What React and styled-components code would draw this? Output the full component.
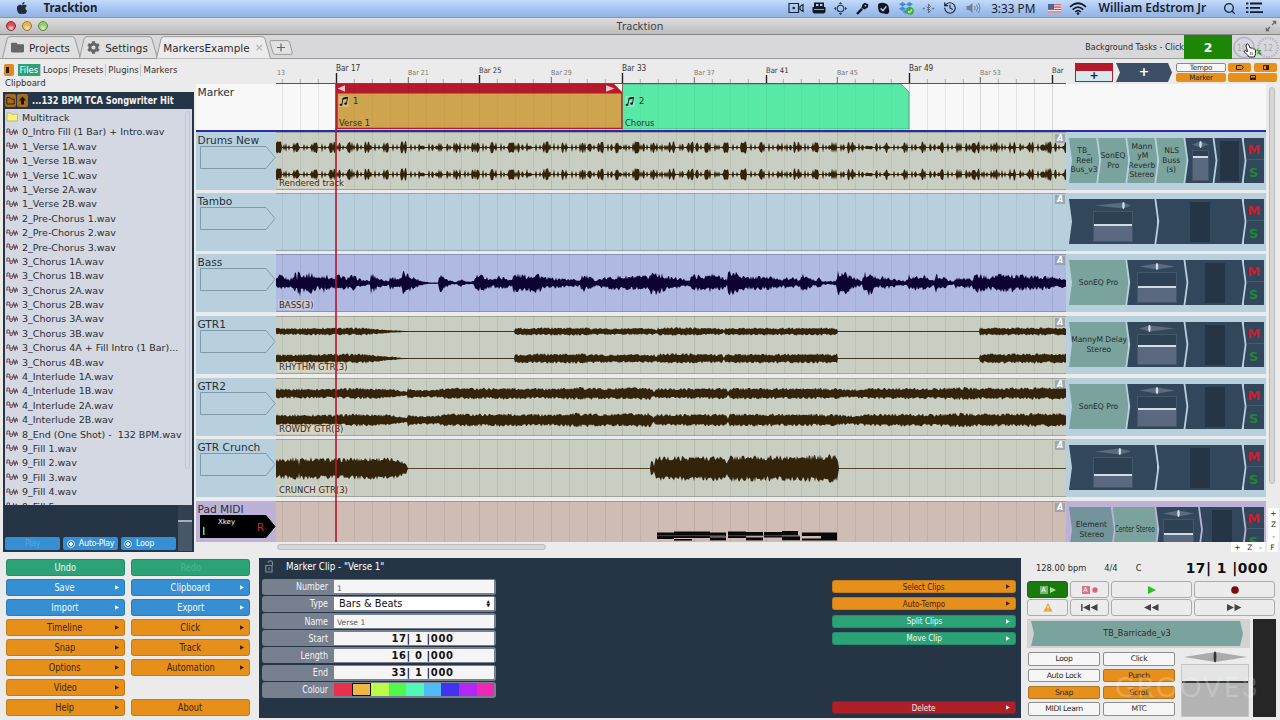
import React from "react";
import styled, { createGlobalStyle } from "styled-components";
import { FaApple, FaDropbox, FaFolder, FaCog } from "react-icons/fa";
import { LuHistory, LuSearch } from "react-icons/lu";

//data
const FILES = [
  "0_Intro Fill (1 Bar) + Intro.wav",
  "1_Verse 1A.wav",
  "1_Verse 1B.wav",
  "1_Verse 1C.wav",
  "1_Verse 2A.wav",
  "1_Verse 2B.wav",
  "2_Pre-Chorus 1.wav",
  "2_Pre-Chorus 2.wav",
  "2_Pre-Chorus 3.wav",
  "3_Chorus 1A.wav",
  "3_Chorus 1B.wav",
  "3_Chorus 2A.wav",
  "3_Chorus 2B.wav",
  "3_Chorus 3A.wav",
  "3_Chorus 3B.wav",
  "3_Chorus 4A + Fill Intro (1 Bar)...",
  "3_Chorus 4B.wav",
  "4_Interlude 1A.wav",
  "4_Interlude 1B.wav",
  "4_Interlude 2A.wav",
  "4_Interlude 2B.wav",
  "8_End (One Shot) -  132 BPM.wav",
  "9_Fill 1.wav",
  "9_Fill 2.wav",
  "9_Fill 3.wav",
  "9_Fill 4.wav",
  "9_Fill 5.wav",
];

const SWATCHES = [
  "#e8304a",
  "#efb545",
  "#bdfb4b",
  "#50fa4a",
  "#50fab6",
  "#4fbcf7",
  "#4233f0",
  "#b227f3",
  "#ee27b4",
];

const BAR = 17.9;
const FIRST = 6.4; // bar line left of the lane's first beat
const LANE = 790;

// loudness keyframes, [x, height]
const BASS = [
  [0, 4], [4, 7], [12, 4], [17, 5], [19, 13], [21, 4], [22, 12], [28, 8], [35, 9], [42, 5], [48, 8],
  [58, 4], [61, 8], [70, 5], [76, 7], [86, 3], [94, 2], [95, 9], [104, 4], [113, 2], [114, 6], [125, 4],
  [127, 10], [136, 6], [146, 2], [154, 0.6], [162, 0.6], [163, 9], [172, 3], [180, 1], [185, 3.5], [191, 1],
  [198, 2], [200, 7], [206, 7], [218, 3], [221, 7], [236, 3], [238, 8], [252, 7], [262, 9], [268, 5], [290, 4],
  [304, 3], [306, 8], [320, 3], [330, 5], [342, 6], [356, 6], [372, 6], [376, 10], [381, 10], [390, 6],
  [414, 3], [416, 8], [426, 6], [436, 8], [450, 5], [451, 2], [452, 10], [460, 10], [470, 5], [476, 6],
  [490, 6], [506, 4], [516, 5], [524, 3], [526, 8], [540, 2], [543, 6], [546, 1.5], [560, 2], [562, 12],
  [574, 7], [586, 2], [588, 9], [594, 11], [604, 3], [606, 6], [630, 2], [633, 7], [644, 5], [650, 7],
  [658, 2], [660, 8], [670, 4], [678, 1.5], [680, 5], [696, 4], [701, 8], [712, 6], [726, 8], [744, 7],
  [764, 6], [790, 4],
];
const RHYTHM = [
  [0, 3], [50, 3.3], [90, 3.3], [105, 2], [132, 0.3], [238, 0.3], [239, 3.2], [300, 3.6], [330, 2.8],
  [378, 3], [380, 1.4], [382, 3.2], [400, 3.8], [446, 3], [448, 1], [450, 3.2], [561, 3.3], [562, 0.3],
  [703, 0.3], [704, 3.4], [790, 3.4],
];
const ROWDY = [
  [0, 4.5], [60, 4.2], [80, 5], [110, 4.5], [131, 2], [132, 5], [140, 3.6], [160, 3.6], [168, 5], [240, 5], [270, 4.5],
  [300, 5.6], [330, 4.8], [374, 5.6], [378, 2], [380, 4.5], [450, 5], [452, 1.6], [454, 5], [562, 4.6],
  [572, 3.6], [600, 5.2], [660, 4.6], [676, 5.6], [720, 5], [790, 5.5],
];
const CRUNCH = [
  [0, 9], [22, 10], [23, 4], [24, 10], [60, 9], [100, 10], [120, 9], [130, 5], [132, 0.3], [374, 0.3],
  [375, 9], [378, 3], [380, 10.5], [420, 11], [449, 11], [451, 5], [454, 11.5], [520, 11], [561, 12.5], [563, 0.3],
];

const rand = (n) => {
  const v = Math.sin(n * 127.1 + 311.7) * 43758.5453;
  return v - Math.floor(v);
};

const level = (keys, x) => {
  const i = keys.findIndex((k) => k[0] > x);
  if (i < 0) return keys[keys.length - 1][1];
  if (i === 0) return keys[0][1];
  const [x0, a] = keys[i - 1];
  const [x1, b] = keys[i];
  return a + ((b - a) * (x - x0)) / (x1 - x0);
};

// a burst late in every bar, single hits between them
const drumLevel = (x) => {
  const p = (x - 60 + BAR * 10) % BAR;
  const r = rand(Math.floor(x) + 5);
  if (p > 10.5 && p < 17) return r > 0.45 ? 3.6 + r * 2.4 : 1.8;
  if (p > 3 && p < 4.1) return 4.6;
  if (p > 6.5 && p < 7.6) return 3;
  return r > 0.9 ? 3.2 : 0.6;
};

const wave = (levelAt, mid, rough, seed) => {
  const top = [];
  const bottom = [];
  for (let x = 0; x <= LANE; x += 1) {
    const a = levelAt(x);
    const up = a < 0.5 ? a : a * (1 - rough + rand(x + seed) * rough * 1.6);
    const down = a < 0.5 ? a : a * (1 - rough + rand(x + seed + 900) * rough * 1.6);
    top.push(`${x},${(mid - up).toFixed(1)}`);
    bottom.unshift(`${x},${(mid + down).toFixed(1)}`);
  }
  return top.concat(bottom).join(" ");
};

const TRACKS = [
  {
    name: "Drums New", clip: "Rendered track", bg: "#c8cec1", ink: "#33230a", gap: 3, fader: 17, meter: 19, pan: 50, vol: 20,
    plugins: [["TB_", "Reel", "Bus_v3"], ["SonEQ", "Pro"], ["Mann", "yM", "Reverb", "Stereo"], ["NLS", "Buss", "(s)"]],
    waves: [wave(drumLevel, 15.5, 0.2, 1), wave(drumLevel, 42.5, 0.2, 1)],
  },
  { name: "Tambo", bg: "#b8d0de", gap: 3, fader: 40, meter: 20, pan: 79, vol: 42, plugins: [], waves: [] },
  {
    name: "Bass", clip: "BASS(3)", bg: "#afb9e1", ink: "#0c0332", gap: 4, fader: 40, meter: 20, pan: 50, vol: 47,
    plugins: [["SonEQ Pro"]],
    waves: [wave((x) => level(BASS, x), 29, 0.45, 3)],
  },
  {
    name: "GTR1", clip: "RHYTHM GTR(3)", bg: "#c8cec1", ink: "#33230a", gap: 4, fader: 40, meter: 20, pan: 29, vol: 36,
    plugins: [["MannyM Delay", "Stereo"]],
    waves: [
      wave((x) => level(RHYTHM, x), 15.5, 0.35, 7),
      wave((x) => level(RHYTHM, x) * (level(RHYTHM, x) > 1 ? 1.25 : 1), 42.5, 0.35, 11),
    ],
  },
  {
    name: "GTR2", clip: "ROWDY GTR(3)", bg: "#c8cec1", ink: "#33230a", gap: 3, fader: 40, meter: 20, pan: 50, vol: 39,
    plugins: [["SonEQ Pro"]],
    waves: [wave((x) => level(ROWDY, x), 15.5, 0.32, 13), wave((x) => level(ROWDY, x) * 1.12, 42, 0.32, 17)],
  },
  {
    name: "GTR Crunch", clip: "CRUNCH GTR(3)", bg: "#c8cec1", ink: "#33230a", gap: 4, fader: 40, meter: 20, pan: 69, vol: 56,
    plugins: [],
    waves: [wave((x) => level(CRUNCH, x), 29.5, 0.3, 19)],
  },
  {
    name: "Pad MIDI", bg: "#cfbdb5", head: "#beb1d8", gap: 0, fader: 31, meter: 20, pan: 50, vol: 45, midi: true,
    plugins: [["Element", "Stereo"], ["Center Stereo"]], waves: [],
  },
];

// [x, y, width, height]
const NOTES = [
  [381, 31.5, 17, 6.5], [398, 30.5, 36, 6.5], [398, 38, 18, 1.6], [434, 31.5, 16, 4], [434, 36.4, 16, 3],
  [452, 30.5, 18, 6.5], [469, 31, 18, 4], [470, 36.4, 17, 3], [488, 31, 18, 5.5],
  [506, 30, 16, 4.5], [506, 35.3, 18, 4], [526, 31.5, 35, 3.5], [526, 37.5, 35, 2], [545, 35, 16, 3],
];

const MENU = [
  ["Undo", "green", "Redo", "greenOff"],
  ["Save", "blue", "Clipboard", "blue"],
  ["Import", "blue", "Export", "blue"],
  ["Timeline", "orange", "Click", "orange"],
  ["Snap", "orange", "Track", "orange"],
  ["Options", "orange", "Automation", "orange"],
  ["Video", "orange", null, null],
  ["Help", "orange", "About", "orange"],
];

const TONES = {
  green: { bg: "#2ba377", fg: "#f2fbf7" },
  greenOff: { bg: "#2ba377", fg: "#4fb590" },
  blue: { bg: "#368fd3", fg: "#f2f8fd" },
  orange: { bg: "#e68f1a", fg: "#3c2608" },
  red: { bg: "#ad2028", fg: "#fbeaea" },
};

//components
const GridLines = ({ height }) => (
  <g>
    {Array.from({ length: 45 }, (_, i) => (
      <rect key={i} x={Math.round(FIRST + i * BAR)} y="0" width="1" height={height} fill="#000" opacity={(i + 1) % 4 === 0 ? 0.09 : 0.055} />
    ))}
  </g>
);

const Ruler = () => (
  <svg width={LANE} height="25">
    {Array.from({ length: 44 }, (_, i) => {
      const bar = 14 + i;
      const x = Math.round(60 + (bar - 17) * BAR);
      const rank = (bar - 1) % 16 === 0 ? 11 : (bar - 1) % 8 === 0 ? 9 : (bar - 1) % 4 === 0 ? 7 : 5;
      const dark = rank === 5 ? "#aaa" : rank === 7 ? "#666" : "#222";
      return (
        <g key={bar}>
          <rect x={x - 0.2} y={25 - rank} width={rank > 7 ? 1.4 : 1} height={rank} fill={dark} />
          {rank > 5 && (
            <RulerText x={x} y={rank === 11 ? 12.3 : rank === 9 ? 14 : 15.5} $rank={rank}>
              {bar === 57 ? "Bar" : `Bar ${bar}`}
            </RulerText>
          )}
        </g>
      );
    })}
    <RulerText x="1" y="15.5" $rank={7}>13</RulerText>
    <rect x="0" y="24" width={LANE} height="1" fill="#555" />
  </svg>
);

const MusicNote = () => (
  <svg width="10" height="11" viewBox="0 0 10 11">
    <rect width="10" height="11" fill="#fff" opacity=".22" />
    <path d="M2.9 8.5 L4 2.2 L8.6 1.2 L7.5 7.4" fill="none" stroke="#111" strokeWidth=".9" />
    <path d="M3.9 2 L8.7 .9 L8.4 2.6 L3.6 3.7z" fill="#111" />
    <ellipse cx="2" cy="8.8" rx="1.4" ry="1.1" fill="#111" />
    <ellipse cx="6.6" cy="7.7" rx="1.4" ry="1.1" fill="#111" />
  </svg>
);

const MarkerLane = () => (
  <MarkerRow>
    <TrackName>Marker</TrackName>
    <MarkerCanvas>
      <svg width={LANE} height="46">
        <GridLines height={46} />
        <path d="M60 0 H338 L347 9 V45 H60z" fill="#cfa44e" />
        <path d="M60 0 H338 L347 9 V9.5 H60z" fill="#b5192c" />
        <path d="M61 9 V44.5 H346 V9" fill="none" stroke="#b5192c" strokeWidth="1.4" />
        <path d="M69 1.2 V7.8 L61.5 4.5z M330 1.2 V7.8 L338.5 4.5z" fill="#f5c3c8" />
        <path d="M346.5 0 H625 L633 8 V45 H346.5z" fill="#58e9a6" stroke="#4f9f7c" strokeWidth=".8" />
        <g opacity=".5"><GridLines height={46} /></g>
        <rect x="346" y="0" width="1" height="45" fill="#b5192c" opacity=".5" />
      </svg>
      <MarkerClip $x={63}>
        <MarkerHead><MusicNote /> 1</MarkerHead>
        <span>Verse 1</span>
      </MarkerClip>
      <MarkerClip $x={349}>
        <MarkerHead><MusicNote /> 2</MarkerHead>
        <span>Chorus</span>
      </MarkerClip>
    </MarkerCanvas>
  </MarkerRow>
);

const Diamond = ({ $w, $pos }) => (
  <svg width={$w} height="7" viewBox={`0 0 ${$w} 7`}>
    <path d={`M0 3.5 L${($w * $pos) / 100} 0.6 L${$w} 3.5 L${($w * $pos) / 100} 6.4z`} fill="#5d6b80" />
    <ellipse cx={($w * $pos) / 100} cy="3.5" rx="1.2" ry="3.4" fill="#cfe0ec" />
  </svg>
);

const Fader = ({ track }) => (
  <Slot>
    <Diamond $w={Math.min(track.fader, 36)} $pos={track.pan} />
    <FaderBox $w={track.fader}>
      <FaderFill style={{ height: `${100 - track.vol}%` }} />
    </FaderBox>
  </Slot>
);

const Track = ({ track }) => (
  <TrackRow $gap={track.gap} $last={track.midi}>
    <TrackHead $bg={track.head}>
      <TrackName>{track.name}</TrackName>
      <Input width="76" height="24">
        <path
          d="M.5 .5 H66 L75 11.5 L66 22.5 H.5z"
          fill={track.midi ? "#000" : "none"}
          stroke={track.midi ? "#000" : "#7f9bab"}
        />
        {track.midi && (
          <>
            <rect x="3" y="12" width="1.5" height="8" fill="#5ce27c" />
            <InputText x="18" y="8.5">Xkey</InputText>
            <RecText x="57" y="15.5">R</RecText>
          </>
        )}
      </Input>
    </TrackHead>
    <LaneBox $bg={track.bg}>
      <svg width={LANE} height="58">
        <GridLines height={58} />
        {track.waves.map((points, i) => (
          <polygon key={i} points={points} fill={track.ink} />
        ))}
        {track.waves.length === 1 && <rect x="0" y="29" width={LANE} height="1" fill={track.ink} opacity=".6" />}
        {track.waves.length === 2 && (
          <path d="M0 15.5 H790 M0 42.5 H790" stroke={track.ink} strokeWidth=".8" />
        )}
        {track.midi &&
          NOTES.map(([x, y, w, h], i) => <rect key={i} x={x} y={y} width={w} height={h} fill="#0b0808" />)}
        {track.midi && <path d="M381 34.7 H449 M452 34.7 H524" stroke="#6d6462" strokeWidth=".7" />}
      </svg>
      {track.clip && <ClipName>{track.clip}</ClipName>}
      <AutoBadge>A</AutoBadge>
    </LaneBox>
    <Rack $bg={track.head}>
      <Slots>
        {track.plugins.map((lines, i) => (
          <Slot key={i} $plugin $dim={lines[0] === "Element"}>
            {lines.map((l) => (
              <PluginText key={l} $small={l === "Center Stereo"}>{l}</PluginText>
            ))}
          </Slot>
        ))}
        <Fader track={track} />
        <Slot>
          <Meter $w={track.meter} />
        </Slot>
      </Slots>
      <MuteSolo>
        <Mute>M</Mute>
        <Solo>S</Solo>
      </MuteSolo>
    </Rack>
  </TrackRow>
);

const MenuIcons = () => (
  <>
    <svg width="16" height="12" viewBox="0 0 16 12">
      <path d="M1 1.5 H10.5 V10.5 H1z M12 4.5 L15 2.5 V9.5 L12 7.5z" fill="none" stroke="#1d2636" strokeWidth="1.2" />
      <circle cx="5.7" cy="6" r="1.3" fill="#1d2636" />
    </svg>
    <svg width="14" height="12" viewBox="0 0 14 12">
      <path d="M2 0.5 H12 V5 H13.5 V10 L12 11.5 H2 L.5 10 V5 H2z" fill="#131a26" />
      <path d="M4 2 h2.4 v2 h-2.4z M8 2 h2.4 v2 h-2.4z M2 7 h10 v.8 h-10z" fill="#b9d0ee" />
    </svg>
    <svg width="13" height="13" viewBox="0 0 13 13">
      <circle cx="6.5" cy="6.5" r="3.3" fill="none" stroke="#273246" strokeWidth="1.1" />
      <path d="M6.5 0 L8.3 2 H4.7z M6.5 13 L8.3 11 H4.7z M0 6.5 L2 4.7 V8.3z M13 6.5 L11 4.7 V8.3z" fill="#273246" />
    </svg>
    <svg width="13" height="13" viewBox="0 0 13 13">
      <path d="M1 12 L6 6.8" stroke="#10151f" strokeWidth="2.4" />
      <path d="M5.4 6 L6.4 2.4 L9 .8 L12.4 2.6 L11.8 5.6 L8.6 7.6z" fill="#10151f" />
      <circle cx="9.4" cy="3.6" r=".9" fill="#b0caef" />
    </svg>
    <svg width="13" height="13" viewBox="0 0 13 13">
      <path d="M1 4 Q.5 1 4 1 Q6 .4 8 1.2 Q12 2.6 11.8 6.6 Q13 9 11.6 11.2 Q9.6 12.8 7.6 11.6 Q1.4 11.6 1.2 6.4z" fill="#10151f" />
      <path d="M3.6 6.4 L6 8.6 L9.4 4.4" fill="none" stroke="#b0caef" strokeWidth="1.5" />
    </svg>
    <DropIcon>
      <FaDropbox size={14} color="#3d8fd8" />
      <svg width="8" height="8" viewBox="0 0 8 8">
        <circle cx="4" cy="4" r="3.8" fill="#38b02e" />
        <path d="M2 4.2 L3.5 5.6 L6 2.6" fill="none" stroke="#fff" strokeWidth="1.1" />
      </svg>
    </DropIcon>
    <svg width="13" height="13" viewBox="0 0 13 13">
      <path d="M4.5 4.5 L8.5 8.5 L6.5 11 V2 L8.5 4.5 L4.5 8.5" fill="none" stroke="#5d6d88" strokeWidth="1" />
      <path d="M.8 6.5 h2 M10.2 6.5 h2" stroke="#5d6d88" strokeWidth="1.6" />
    </svg>
    <LuHistory size={14} color="#1d2636" />
    <svg width="15" height="12" viewBox="0 0 15 12">
      <path d="M0.5 4 H3 L6.5 1 V11 L3 8 H.5z" fill="#70819d" />
      <path d="M8.5 4 q1.5 2 0 4 M10.5 2.5 q2.6 3.5 0 7 M12.3 1 q3.2 5 0 10" fill="none" stroke="#70819d" />
    </svg>
  </>
);

const Wifi = () => (
  <svg width="18" height="13" viewBox="0 0 18 13">
    <path d="M1 5 Q9 -2.5 17 5 M3.7 7.6 Q9 2.6 14.3 7.6 M6.2 10 Q9 7.4 11.8 10" fill="none" stroke="#161d2a" strokeWidth="1.7" />
    <circle cx="9" cy="11.6" r="1.3" fill="#161d2a" />
  </svg>
);

const Flag = () => (
  <svg width="13" height="9" viewBox="0 0 13 9">
    <rect width="13" height="9" fill="#f1dede" />
    <path d="M0 .7 h13 M0 3.1 h13 M0 5.5 h13 M0 8 h13" stroke="#c6505c" strokeWidth="1.1" />
    <rect width="6" height="5" fill="#52639c" />
  </svg>
);

const Tab = ({ width, active, children }) => (
  <TabBox $w={width}>
    <TabShape width={width} height="23" viewBox={`0 0 ${width} 23`}>
      <path
        d={`M.5 22.5 L5 3 Q5.6 .6 8 .6 H${width - 9} Q${width - 6.6} .6 ${width - 6} 3 L${width - 0.5} 22.5`}
        fill={active ? "#ececec" : "#e0e0e1"}
        stroke="#9b9b9b"
      />
      {!active && <path d={`M0 22.5 H${width}`} stroke="#9b9b9b" />}
    </TabShape>
    <TabContent>{children}</TabContent>
  </TabBox>
);

const Button = ({ tone, arrow, children, slim }) => (
  <ButtonBox $tone={TONES[tone]} $slim={slim}>
    <Narrow $sx={slim ? 0.76 : 0.81}>{children}</Narrow>
    {arrow && (
      <Arrow width="4" height="5" viewBox="0 0 4 5">
        <path d="M0 .3 L4 2.5 L0 4.7z" fill={TONES[tone].fg} />
      </Arrow>
    )}
  </ButtonBox>
);

const Hand = () => (
  <HandSvg width="14" height="15" viewBox="0 0 14 15">
    <path
      d="M3.6 1.2 Q4.8 .4 5.6 1.6 L7 5 Q8 4.4 8.8 5.2 Q10 4.8 10.5 5.8 Q12 5.6 12.4 7 L12.6 10.5 L11.5 14 H6 L4.6 12 L1.2 9 Q1 7.6 2.4 7.7 L4.6 8.6 L3 3z"
      fill="#fff"
      stroke="#222"
      strokeWidth="1"
    />
    <path d="M7.6 9 v3 M9.2 9 v3" stroke="#444" strokeWidth=".7" />
  </HandSvg>
);

const App = () => {
  return (
    <Screen>
      <GlobalStyle />
      <MenuBar>
        <FaApple size={14} color="#222c3c" />
        <AppName>Tracktion</AppName>
        <MenuIcons />
        <Clock>3:33 PM</Clock>
        <Flag />
        <Wifi />
        <UserName>William Edstrom Jr</UserName>
        <LuSearch size={13} color="#1a2230" strokeWidth={2.4} />
        <ListIcon width="17" height="12" viewBox="0 0 17 12">
          <path d="M0 1.5 h2.4 M0 5.8 h2.4 M0 10.2 h2.4 M4 1.5 h12 M4 5.8 h10 M4 10.2 h13" stroke="#141b27" strokeWidth="1.8" />
        </ListIcon>
      </MenuBar>
      <TitleBar>
        <Light $c="#dd4a50" $e="#8d2a30" />
        <Light $c="#eab54e" $e="#9c7428" />
        <Light $c="#8fd069" $e="#558a3c" />
        <WindowTitle>Tracktion</WindowTitle>
        <svg width="12" height="12" viewBox="0 0 12 12">
          <path d="M10.5 1.5 L7 5 M1.5 10.5 L5 7" stroke="#666" strokeWidth="1.3" />
          <path d="M7.2 .8 H11.2 V4.8z M.8 7.2 V11.2 H4.8z" fill="#666" />
        </svg>
      </TitleBar>
      <TabBar>
        <Tab width={79}><FaFolder size={13} color="#666" /> Projects</Tab>
        <Tab width={79}><FaCog size={13} color="#666" /> Settings</Tab>
        <Tab width={115} active>MarkersExample <Close>×</Close></Tab>
        <AddTab width="24" height="15" viewBox="0 0 24 15">
          <path d="M2.5 .6 H18 Q20 .6 20.6 2.4 L23.3 12.6 Q23.5 14.4 21.5 14.4 H6.5 Q4.4 14.4 3.9 12.4 L1 2.5 Q.6 .6 2.5 .6z" fill="#e2e2e2" stroke="#9b9b9b" />
          <path d="M12 3.5 v8 M8 7.5 h8" stroke="#666" strokeWidth="1.2" />
        </AddTab>
        <TaskText>Background Tasks - Click</TaskText>
        <TaskCount>2</TaskCount>
        <Gauges>
          <svg width="48" height="24" viewBox="0 0 48 24">
            <circle cx="12" cy="12.5" r="10" fill="none" stroke="#b5b0d2" strokeWidth="1.5" />
            <circle cx="36" cy="12.5" r="9.6" fill="none" stroke="#b5b0d2" strokeWidth="2.4" strokeDasharray="1.3 1.3" />
            <path d="M24.5 15 l3.4 1 l-1.6 2 l3 1.4" stroke="#2ea32e" strokeWidth="1.8" fill="none" />
            <GaugeText x="5" y="15.5">10</GaugeText>
            <GaugeText x="31" y="15.5">12</GaugeText>
          </svg>
          <Hand />
        </Gauges>
      </TabBar>

      <Main>
        <Browser>
          <BrowserTabs>
            <PanelIcon />
            <BrowserTab $on>Files</BrowserTab>
            <BrowserTab>Loops</BrowserTab>
            <BrowserTab>Presets</BrowserTab>
            <BrowserTab>Plugins</BrowserTab>
            <BrowserTab>Markers</BrowserTab>
          </BrowserTabs>
          <BrowserSub>Clipboard</BrowserSub>
          <FilePanel>
            <FileHead>
              <HeadButton>
                <svg width="9" height="9" viewBox="0 0 9 9"><path d="M.8 1.5 H4 L5 3 H8.2 V8 H.8z" fill="none" stroke="#33220a" /></svg>
              </HeadButton>
              <HeadButton>
                <svg width="9" height="9" viewBox="0 0 9 9"><path d="M4.5 .5 L8 4.5 H6 V8.5 H3 V4.5 H1z" fill="#1c1204" /></svg>
              </HeadButton>
              <FileTitle>...132 BPM TCA Songwriter Hit</FileTitle>
            </FileHead>
            <FileList>
              <FileRow>
                <svg width="13" height="12" viewBox="0 0 13 12"><path d="M1 2 H5 L6 3.3 H11.5 V10 H1z" fill="#f6f287" stroke="#b5ae5c" strokeWidth=".8" /></svg>
                Multitrack
              </FileRow>
              {FILES.map((f) => (
                <FileRow key={f}>
                  <svg width="13" height="10" viewBox="0 0 13 10">
                    <path d="M0 5 H12" stroke="#c05060" strokeWidth="1" />
                    <path d="M1 5 V2 H3.4 L4.2 7.5 H6 L7.6 2.4 L9 7.6 L10.4 2.8 L11.6 6.8" fill="none" stroke="#4c4650" strokeWidth=".9" />
                  </svg>
                  {f}
                </FileRow>
              ))}
              <ListScroll />
            </FileList>
            <Preview>
              <PreviewButtons>
                <PreviewButton><Dim>Play</Dim></PreviewButton>
                <PreviewButton><Radio />Auto-Play</PreviewButton>
                <PreviewButton $left><Radio />Loop</PreviewButton>
              </PreviewButtons>
              <PreviewVolume />
            </Preview>
          </FilePanel>
        </Browser>

        <Arranger>
          <RulerRow>
            <Ruler />
            <AddTrack>
              <span />
              <b>+</b>
            </AddTrack>
            <AddPlugin>+</AddPlugin>
            <ToggleColumn>
              <Toggle>Tempo</Toggle>
              <Toggle $on>Marker</Toggle>
            </ToggleColumn>
            <ViewGrid>
              <ViewButton><svg width="8" height="5"><path d="M.5 .5 H5.5 L7.5 2.5 L5.5 4.5 H.5z" fill="none" stroke="#33220a" /></svg></ViewButton>
              <ViewButton><svg width="6" height="5"><path d="M.5 .5 H5.5 V4.5 H.5z" fill="none" stroke="#33220a" /><path d="M3 0h3v5h-3z" fill="#33220a" /></svg></ViewButton>
              <ViewButton $wide><svg width="6" height="5"><path d="M.5 .5 H5.5 V4.5 H.5z" fill="none" stroke="#33220a" /><path d="M0 2.5h6v2.5h-6z" fill="#33220a" /></svg></ViewButton>
            </ViewGrid>
          </RulerRow>
          <TrackArea>
            <TrackStack>
              <MarkerLane />
              {TRACKS.map((t) => (
                <Track key={t.name} track={t} />
              ))}
              <Playhead />
            </TrackStack>
            <SideScroll>
              <ScrollThumb />
              <ZoomColumn><span>+</span><span>Z</span><span>-</span></ZoomColumn>
            </SideScroll>
          </TrackArea>
          <BottomScroll>
            <HThumb />
            <ZoomRow><span>+</span><span>Z</span><span>-</span></ZoomRow>
            <FitButton>F</FitButton>
          </BottomScroll>
        </Arranger>
      </Main>

      <Lower>
        <MenuGrid>
          {MENU.map(([a, ta, b, tb]) => (
            <React.Fragment key={a}>
              <Button tone={ta} arrow={a !== "Undo"}>{a}</Button>
              {b ? <Button tone={tb} arrow={b !== "Redo" && b !== "About"}>{b}</Button> : <span />}
            </React.Fragment>
          ))}
        </MenuGrid>

        <Properties>
          <PropLeft>
            <PropTitle>
              <svg width="9" height="13" viewBox="0 0 9 13">
                <path d="M.8 5.5 H7 V12 H.8z" fill="none" stroke="#7c8794" strokeWidth="1.2" />
                <path d="M7.5 5.5 V3 Q7.5 .8 5.3 .8 Q3.2 .8 3.2 2.8" fill="none" stroke="#7c8794" strokeWidth="1.2" />
                <path d="M4 7.5 v2.5" stroke="#7c8794" strokeWidth="1.2" />
              </svg>
              <Narrow $sx={0.87} $left>Marker Clip - "Verse 1"</Narrow>
            </PropTitle>
            <PropRow><PropLabel>Number</PropLabel><Field $tiny>1</Field></PropRow>
            <PropRow><PropLabel>Type</PropLabel><Field $select>Bars &amp; Beats<Chevrons>▲<br />▼</Chevrons></Field></PropRow>
            <PropRow><PropLabel>Name</PropLabel><Field $tiny>Verse 1</Field></PropRow>
            <PropRow><PropLabel>Start</PropLabel><Field $time>17| 1 |000</Field></PropRow>
            <PropRow><PropLabel>Length</PropLabel><Field $time>16| 0 |000</Field></PropRow>
            <PropRow><PropLabel>End</PropLabel><Field $time>33| 1 |000</Field></PropRow>
            <PropRow>
              <PropLabel>Colour</PropLabel>
              <Swatches>
                {SWATCHES.map((c, i) => (
                  <Swatch key={c} $c={c} $on={i === 1} />
                ))}
              </Swatches>
            </PropRow>
          </PropLeft>
          <PropActions>
            <Button slim arrow tone="orange">Select Clips</Button>
            <Button slim arrow tone="orange">Auto-Tempo</Button>
            <Button slim arrow tone="green">Split Clips</Button>
            <Button slim arrow tone="green">Move Clip</Button>
            <Spacer />
            <Button slim arrow tone="red">Delete</Button>
          </PropActions>
        </Properties>

        <Transport>
          <Status>
            <span>128.00 bpm</span>
            <span>4/4</span>
            <span>C</span>
            <Position>17| 1 |000</Position>
          </Status>
          <TransportGrid>
            <Key $on>
              <Letter $c="#79b673">A</Letter>
              <svg width="6" height="6"><path d="M0 0 L6 3 L0 6z" fill="#a9e2a0" /></svg>
            </Key>
            <Key>
              <Letter $c="#e0708a">A</Letter>
              <svg width="6" height="6"><circle cx="3" cy="3" r="2.7" fill="#e0617d" /></svg>
            </Key>
            <Key><svg width="8" height="8"><path d="M0 0 L8 4 L0 8z" fill="#2bc01f" /></svg></Key>
            <Key><svg width="8" height="8"><circle cx="4" cy="4" r="3.8" fill="#7b0a12" /></svg></Key>
            <Key>
              <svg width="10" height="9" viewBox="0 0 10 9"><path d="M5 .3 L9.6 8.6 H.4z" fill="#e9a32f" /><path d="M5 3 v2.6 M5 6.5 v1" stroke="#fff" strokeWidth="1" /></svg>
            </Key>
            <Key><svg width="17" height="7"><path d="M.8 0 V7" stroke="#444" strokeWidth="1.4" /><path d="M9 0 V7 L2 3.5z M16.5 0 V7 L9.5 3.5z" fill="#444" /></svg></Key>
            <Key><svg width="15" height="7"><path d="M7 0 V7 L0 3.5z M14.5 0 V7 L7.5 3.5z" fill="#444" /></svg></Key>
            <Key><svg width="15" height="7"><path d="M0 0 V7 L7 3.5z M7.5 0 V7 L14.5 3.5z" fill="#444" /></svg></Key>
          </TransportGrid>
          <MasterArea>
            <MasterLeft>
              <MasterRack><MasterPlugin>TB_Barricade_v3</MasterPlugin></MasterRack>
              <MasterRow>
                <SwitchGrid>
                  <Switch>Loop</Switch>
                  <Switch>Click</Switch>
                  <Switch>Auto Lock</Switch>
                  <Switch $on>Punch</Switch>
                  <Switch $on>Snap</Switch>
                  <Switch $on>Scroll</Switch>
                  <Switch>MIDI Learn</Switch>
                  <Switch>MTC</Switch>
                </SwitchGrid>
                <MasterFader>
                  <svg width="63" height="12" viewBox="0 0 63 12">
                    <path d="M0 6 L31.5 1 L63 6 L31.5 11z" fill="#ababab" />
                    <ellipse cx="31" cy="6" rx="1.4" ry="5.4" fill="#333" />
                  </svg>
                  <MasterBox />
                </MasterFader>
              </MasterRow>
            </MasterLeft>
            <MasterMeter />
          </MasterArea>
          <Watermark>GROOVE3</Watermark>
        </Transport>
      </Lower>
    </Screen>
  );
};

export default App;

const GlobalStyle = createGlobalStyle`
  * { box-sizing: border-box; }
  body {
    margin: 0;
    background: #ebebeb;
    font-family: "DejaVu Sans", Verdana, sans-serif;
    color: #2b2b2b;
  }
  svg { flex-shrink: 0; display: block; }
`;

const Screen = styled.div`
  display: flex;
  flex-direction: column;
  width: 1280px;
  height: 720px;
  overflow: hidden;
  white-space: nowrap;
  background: #ebebeb;
`;

const MenuBar = styled.div`
  display: flex;
  align-items: center;
  height: 18px;
  padding: 0 17px 1px 15px;
  gap: 8.4px;
  background: linear-gradient(#c3dafa, #a4c3ef 55%, #93b3e2);
  border-bottom: 1px solid #8597b5;
  font-family: "Noto Sans", "Open Sans", sans-serif;
  line-height: 16px;
  color: #1a202c;
`;

const AppName = styled.span`
  flex: 1;
  margin-left: 6px;
  font-weight: 700;
  font-size: 11.5px;
`;

const Clock = styled.span`
  font-size: 11.8px;
  margin: 0 4px 0 2px;
`;

const UserName = styled.span`
  margin: 0 8px 0 3px;
  font-weight: 600;
  font-size: 12px;
`;

const ListIcon = styled.svg`
  margin-left: 2px;
`;

const DropIcon = styled.span`
  display: flex;
  align-items: flex-end;
  svg + svg {
    margin-left: -7px;
  }
`;

const TitleBar = styled.div`
  display: flex;
  align-items: center;
  height: 17px;
  padding: 0 3px 0 6px;
  gap: 6px;
  background: linear-gradient(#dedede, #bcbcbc);
  border-bottom: 1px solid #858585;
`;

const Light = styled.span`
  width: 10px;
  height: 10px;
  border-radius: 50%;
  border: 1px solid ${(p) => p.$e};
  background: radial-gradient(circle at 50% 80%, #fff8, ${(p) => p.$c} 50%);
`;

const WindowTitle = styled.span`
  flex: 1;
  padding-right: 33px;
  text-align: center;
  font-family: "Noto Sans", sans-serif;
  font-size: 10.7px;
  letter-spacing: 0.1px;
  line-height: 16px;
  color: #404040;
`;

const TabBar = styled.div`
  display: flex;
  align-items: flex-end;
  height: 24px;
  padding-left: 2px;
  background: #d8d8da;
  box-shadow: inset 0 -1px #9b9b9b;
`;

const TabBox = styled.div`
  position: relative;
  width: ${(p) => p.$w}px;
  height: 23px;
  margin-right: -2px;
`;

const TabShape = styled.svg`
  position: absolute;
  inset: 0;
`;

const TabContent = styled.div`
  position: relative;
  display: flex;
  align-items: center;
  justify-content: center;
  gap: 5px;
  height: 23px;
  padding-right: 2px;
  font-size: 10.4px;
`;

const Close = styled.span`
  margin-right: -2px;
  color: #aaa;
  font-size: 11px;
`;

const AddTab = styled.svg`
  align-self: center;
  margin-top: 1px;
`;

const TaskText = styled.span`
  flex: 1;
  height: 24px;
  line-height: 25px;
  text-align: right;
  font-size: 8px;
`;

const TaskCount = styled.div`
  width: 48px;
  height: 24px;
  line-height: 25px;
  background: #1e8606;
  color: #fff;
  text-align: center;
  font-size: 12.5px;
  font-weight: 700;
`;

const Gauges = styled.div`
  position: relative;
  width: 48px;
`;

const GaugeText = styled.text`
  font-size: 8px;
  fill: #aaa7b8;
`;

const HandSvg = styled.svg`
  position: absolute;
  left: 11px;
  top: 8px;
`;

const Main = styled.div`
  display: flex;
  height: 495px;
`;

const Browser = styled.div`
  width: 196px;
  padding: 4px 3px 0 3px;
`;

const BrowserTabs = styled.div`
  display: flex;
  align-items: center;
  height: 13px;
  font-size: 8.5px;
`;

const PanelIcon = styled.i`
  width: 10px;
  height: 12px;
  margin: 0 4px 0 1px;
  border: 2px solid #dc8a20;
  border-width: 3px 2px;
  border-radius: 2px;
  background: linear-gradient(90deg, #2a1c08 50%, #dc8a20 50%);
`;

const BrowserTab = styled.span`
  padding: 0 1.5px;
  height: 12px;
  line-height: 12px;
  background: ${(p) => (p.$on ? "#2ba377" : "none")};
  color: ${(p) => (p.$on ? "#fff" : "#333")};
  & + & {
    padding-left: 2.3px;
    border-left: 1px solid ${(p) => (p.$on ? "#2ba377" : "#c4c4c4")};
  }
`;

const BrowserSub = styled.div`
  padding-left: 2px;
  height: 16px;
  line-height: 15px;
  font-size: 8.5px;
`;

const FilePanel = styled.div`
  display: flex;
  flex-direction: column;
  width: 191px;
  height: 460px;
  border: 2px solid #263546;
  border-width: 0 2px;
  background: #263546;
`;

const FileHead = styled.div`
  display: flex;
  align-items: center;
  gap: 1px;
  height: 17px;
`;

const HeadButton = styled.span`
  display: grid;
  flex-shrink: 0;
  place-items: center;
  width: 11px;
  height: 13px;
  border-radius: 2px;
  background: #a86c1e;
`;

const FileTitle = styled.span`
  width: 0;
  margin-left: 3px;
  font-size: 9.7px;
  font-weight: 700;
  color: #f2f4f6;
  transform: scaleX(0.85);
  transform-origin: left;
`;

const FileList = styled.div`
  position: relative;
  height: 396px;
  padding-top: 1.3px;
  overflow: hidden;
  background: #d3d8e2;
`;

const FileRow = styled.div`
  display: flex;
  align-items: center;
  gap: 3px;
  height: 14.4px;
  padding-left: 1px;
  font-size: 9.5px;
  white-space: pre;
  color: #2b2d33;
`;

const ListScroll = styled.i`
  position: absolute;
  right: 2px;
  top: 2px;
  width: 5px;
  height: 358px;
  border: 1px solid #c3c7d0;
  border-radius: 3px;
`;

const Preview = styled.div`
  display: flex;
  height: 47px;
`;

const PreviewButtons = styled.div`
  display: flex;
  align-items: flex-end;
  gap: 3px;
  width: 173px;
  padding-bottom: 2px;
`;

const PreviewButton = styled.span`
  display: flex;
  align-items: center;
  justify-content: ${(p) => (p.$left ? "flex-start" : "center")};
  gap: 4px;
  width: 55px;
  height: 13px;
  padding: 0 3px;
  border-radius: 2px;
  background: #368fd3;
  color: #fff;
  font-size: 8px;
  letter-spacing: -0.3px;
`;

const Dim = styled.span`
  color: #5ba3da;
`;

const Radio = styled.i`
  width: 8px;
  height: 8px;
  flex-shrink: 0;
  border-radius: 50%;
  border: 1px solid #b8dcf6;
  background: radial-gradient(#fff 45%, #368fd3 50%);
`;

const PreviewVolume = styled.i`
  width: 14px;
  height: 46px;
  background: linear-gradient(#33404f 15px, #a5afba 15px, #a5afba 17px, #485767 17px);
`;

const Arranger = styled.div`
  width: 1084px;
`;

const RulerRow = styled.div`
  display: flex;
  align-items: flex-start;
  height: 25px;
  padding-left: 80px;
`;

const RulerText = styled.text`
  font-family: "DejaVu Sans Condensed", "DejaVu Sans", sans-serif;
  font-stretch: condensed;
  font-size: ${(p) => (p.$rank === 11 ? 8.2 : p.$rank === 9 ? 7.6 : 7)}px;
  fill: ${(p) => (p.$rank === 7 ? "#777" : "#333")};
`;

const AddTrack = styled.div`
  display: flex;
  flex-direction: column;
  width: 38px;
  height: 19px;
  margin: 4px 0 0 9px;
  border: 1px solid #b5192c;
  background: #d7e9ec;
  text-align: center;
  span {
    height: 7px;
    background: #b5192c;
  }
  b {
    font-size: 11px;
    line-height: 10px;
    color: #222;
  }
`;

const AddPlugin = styled.div`
  width: 56px;
  height: 19px;
  line-height: 18px;
  margin: 4px 4px 0 3px;
  background: #3c4f66;
  clip-path: polygon(0 0, calc(100% - 4px) 0, 100% 50%, calc(100% - 4px) 100%, 0 100%, 4px 50%);
  color: #fff;
  text-align: center;
  font-size: 13px;
  font-weight: 700;
`;

const ToggleColumn = styled.div`
  display: flex;
  flex-direction: column;
  gap: 1px;
  width: 50px;
  margin-top: 4px;
`;

const Toggle = styled.span`
  height: 9px;
  line-height: 8px;
  border: 1px solid ${(p) => (p.$on ? "#e68f1a" : "#8a8a8a")};
  border-radius: 2px;
  background: ${(p) => (p.$on ? "#e68f1a" : "#f7f7f7")};
  text-align: center;
  font-size: 7.2px;
  letter-spacing: -0.2px;
`;

const ViewGrid = styled.div`
  display: grid;
  grid-template-columns: 23px 23px;
  grid-auto-rows: 9px;
  gap: 1px 3px;
  margin: 4px 0 0 2px;
`;

const ViewButton = styled.span`
  display: grid;
  place-items: center;
  grid-column: ${(p) => (p.$wide ? "span 2" : "auto")};
  border-radius: 2px;
  background: #e68f1a;
`;

const TrackArea = styled.div`
  display: flex;
  height: 458px;
`;

const TrackStack = styled.div`
  position: relative;
  width: 1070px;
  height: 458px;
  overflow: hidden;
`;

const MarkerRow = styled.div`
  display: grid;
  grid-template-columns: 80px 1fr;
  height: 48px;
  background: #f8f8f8;
  border-bottom: 2px solid #2a2ca5;
`;

const MarkerCanvas = styled.div`
  position: relative;
`;

const MarkerClip = styled.div`
  position: absolute;
  left: ${(p) => p.$x}px;
  top: 12px;
  display: flex;
  flex-direction: column;
  gap: 11px;
  font-size: 8.4px;
  line-height: 11px;
`;

const MarkerHead = styled.div`
  display: flex;
  align-items: center;
  gap: 4px;
`;

const TrackRow = styled.div`
  display: grid;
  grid-template-columns: 80px 790px 200px;
  height: ${(p) => (p.$last ? 41 : 58)}px;
  margin-bottom: ${(p) => p.$gap}px;
  overflow: hidden;
`;

const TrackHead = styled.div`
  background: ${(p) => p.$bg || "#b8d0de"};
`;

const TrackName = styled.div`
  height: 14px;
  padding: 1px 0 0 1.5px;
  font-size: 10.6px;
  line-height: 15px;
  color: #24303a;
`;

const Input = styled.svg`
  margin-left: 4px;
`;

const InputText = styled.text`
  font-size: 7px;
  fill: #fff;
`;

const RecText = styled.text`
  font-size: 10px;
  fill: #cf2f38;
`;

const LaneBox = styled.div`
  position: relative;
  height: 58px;
  background: ${(p) => p.$bg};
  box-shadow: inset 0 1px #0003, inset 0 -1px #0003;
`;

const ClipName = styled.span`
  position: absolute;
  left: 2px;
  bottom: 2px;
  padding: 0 1px;
  font-size: 8.5px;
  line-height: 10px;
  background: #f3dcc066;
`;

const AutoBadge = styled.span`
  position: absolute;
  right: 1px;
  top: 2px;
  width: 10px;
  height: 9px;
  line-height: 9px;
  background: #8b96a0b0;
  color: #fff;
  text-align: center;
  font-size: 8px;
  font-weight: 700;
  font-style: italic;
`;

const Rack = styled.div`
  display: flex;
  height: 58px;
  padding: 6px 2px 7px 3px;
  background: ${(p) => p.$bg || "#b8d0de"};
`;

const Slots = styled.div`
  display: flex;
  width: 174.5px;
`;

const Slot = styled.div`
  display: flex;
  flex: 1 1 0;
  flex-direction: column;
  align-items: center;
  justify-content: ${(p) => (p.$plugin ? "center" : "flex-start")};
  min-width: 0;
  height: 45px;
  margin-right: -1.2px;
  padding-top: ${(p) => (p.$plugin ? 0 : 3)}px;
  background: ${(p) => (p.$plugin ? (p.$dim ? "#74949b" : "#7aa39d") : "#33475c")};
  clip-path: polygon(0 0, calc(100% - 3px) 0, 100% 50%, calc(100% - 3px) 100%, 0 100%, 3px 50%);
`;

const PluginText = styled.span`
  font-size: ${(p) => (p.$small ? 8 : 7.9)}px;
  line-height: 9.5px;
  color: #1f2c2c;
  transform: scaleX(${(p) => (p.$small ? 0.72 : 0.96)});
`;

const FaderBox = styled.div`
  display: flex;
  align-items: flex-end;
  width: ${(p) => p.$w}px;
  height: 31px;
  margin-top: 1.5px;
  background: #2e4054;
  border: 1px solid #43566a;
`;

const FaderFill = styled.i`
  width: 100%;
  background: #5a6980;
  border-top: 2px solid #d0dbe4;
`;

const Meter = styled.i`
  width: ${(p) => p.$w}px;
  height: 40px;
  background: #263546;
`;

const MuteSolo = styled.div`
  display: grid;
  grid-template-rows: 22px 23px;
  width: 20.5px;
  height: 45px;
  background: #33475c;
  clip-path: polygon(0 0, 100% 0, 100% 100%, 0 100%, 3px 50%);
  text-align: center;
  font-size: 13px;
  font-weight: 700;
`;

const Mute = styled.span`
  line-height: 24px;
  color: #c8202f;
  border-bottom: 1px solid #465b70;
`;

const Solo = styled.span`
  line-height: 25px;
  color: #1c8a33;
`;

const Playhead = styled.i`
  position: absolute;
  left: 139px;
  top: 0;
  width: 2px;
  height: 458px;
  background: #b5192ccc;
`;

const SideScroll = styled.div`
  display: flex;
  flex-direction: column;
  justify-content: space-between;
  padding: 3px 1px 0 2px;
`;

const ScrollThumb = styled.i`
  width: 6px;
  height: 397px;
  margin-left: 1px;
  border: 1px solid #bdbdbd;
  border-radius: 3px;
  background: #d6d6d6;
`;

const ZoomColumn = styled.div`
  display: flex;
  flex-direction: column;
  justify-content: space-around;
  width: 11px;
  height: 34px;
  background: #fff;
  text-align: center;
  font-size: 7.5px;
  line-height: 9px;
`;

const BottomScroll = styled.div`
  display: flex;
  height: 12px;
  padding-left: 81px;
  gap: 2px;
`;

const HThumb = styled.i`
  width: 269px;
  height: 6px;
  margin: 2px 683px 0 0;
  border: 1px solid #bdbdbd;
  border-radius: 3px;
  background: #d6d6d6;
`;

const ZoomRow = styled.div`
  display: flex;
  justify-content: space-around;
  width: 34px;
  height: 10px;
  background: #fff;
  font-size: 7.5px;
  line-height: 11px;
`;

const FitButton = styled.div`
  width: 11px;
  height: 10px;
  background: #fff;
  text-align: center;
  font-size: 7.5px;
  line-height: 11px;
`;

const Lower = styled.div`
  display: flex;
  height: 166px;
`;

const MenuGrid = styled.div`
  display: grid;
  grid-template-columns: 119px 119px;
  grid-auto-rows: 17px;
  gap: 3px 6.5px;
  width: 259px;
  padding: 5px 0 0 5.5px;
`;

const ButtonBox = styled.div`
  position: relative;
  display: flex;
  align-items: center;
  justify-content: center;
  height: ${(p) => (p.$slim ? 13 : 17)}px;
  border: 1px solid #0002;
  border-radius: 3px;
  background: ${(p) => p.$tone.bg};
  color: ${(p) => p.$tone.fg};
  font-size: ${(p) => (p.$slim ? 9.5 : 10.2)}px;
  line-height: 12px;
`;

const Narrow = styled.span`
  transform: scaleX(${(p) => p.$sx});
  transform-origin: ${(p) => (p.$left ? "left" : "center")};
`;

const Arrow = styled.svg`
  position: absolute;
  right: 5px;
`;

const Properties = styled.div`
  display: flex;
  justify-content: space-between;
  width: 762px;
  height: 160px;
  margin-top: 4px;
  padding: 0 5px 0 3px;
  background: #263546;
`;

const PropLeft = styled.div`
  display: flex;
  flex-direction: column;
  gap: 1.2px;
  width: 234px;
`;

const PropTitle = styled.div`
  display: flex;
  align-items: center;
  gap: 12px;
  height: 19.5px;
  padding: 0 0 2px 3px;
  color: #fff;
  font-size: 10px;
`;

const PropRow = styled.div`
  display: flex;
  align-items: center;
  height: 16px;
  border-radius: 3px;
  background: #76808f;
`;

const PropLabel = styled.span`
  width: 72px;
  padding-right: 6px;
  text-align: right;
  font-size: 9.6px;
  color: #f4f5f7;
  transform: scaleX(0.83);
  transform-origin: 66px 50%;
`;

const Field = styled.span`
  display: flex;
  align-items: center;
  justify-content: ${(p) => (p.$time ? "center" : "flex-start")};
  width: 160px;
  height: 13px;
  padding: ${(p) => (p.$time ? "0 0 0 17px" : p.$tiny ? "3px 0 0 3px" : "0 5px")};
  background: ${(p) => (p.$select ? "#fff" : "#f5f5f5")};
  color: ${(p) => (p.$tiny ? "#555" : "#111")};
  font-size: ${(p) => (p.$time ? 10 : p.$tiny ? 7.6 : 9.8)}px;
  font-weight: ${(p) => (p.$time ? 700 : 400)};
  letter-spacing: ${(p) => (p.$time ? 0.6 : 0)}px;
`;

const Chevrons = styled.span`
  margin-left: auto;
  margin-right: -1px;
  font-size: 4.5px;
  line-height: 4px;
`;

const Swatches = styled.div`
  display: flex;
  width: 160px;
`;

const Swatch = styled.i`
  flex: 1;
  height: 13px;
  background: ${(p) => p.$c};
  border: ${(p) => (p.$on ? "1px solid #111" : "none")};
`;

const PropActions = styled.div`
  display: flex;
  flex-direction: column;
  gap: 4.3px;
  width: 184px;
  padding: 22px 0 4px;
`;

const Spacer = styled.div`
  flex: 1;
`;

const Transport = styled.div`
  position: relative;
  width: 259px;
  padding: 3px 3px 2px 6px;
`;

const Status = styled.div`
  display: flex;
  align-items: center;
  height: 21px;
  padding: 1px 0 0 9px;
  gap: 18px;
  font-size: 8.3px;
`;

const Position = styled.b`
  margin-left: auto;
  padding-right: 9px;
  font-size: 13.8px;
  letter-spacing: 0.5px;
  color: #111;
`;

const TransportGrid = styled.div`
  display: grid;
  grid-template-columns: 41px 39px 81px 81px;
  grid-auto-rows: 17px;
  gap: 1px 2px;
  margin-top: 3px;
`;

const Key = styled.div`
  display: flex;
  align-items: center;
  justify-content: center;
  gap: 2px;
  border: 1px solid ${(p) => (p.$on ? "#1c6a10" : "#ababab")};
  border-radius: 3px;
  background: ${(p) => (p.$on ? "#1b7a0e" : "#ececec")};
`;

const Letter = styled.span`
  width: 8px;
  height: 8px;
  line-height: 8px;
  background: ${(p) => p.$c};
  color: #fff;
  text-align: center;
  font-size: 6.5px;
`;

const MasterArea = styled.div`
  display: flex;
  gap: 3px;
  margin-top: 3px;
`;

const MasterLeft = styled.div`
  width: 223px;
`;

const MasterRack = styled.div`
  height: 29px;
  padding: 2px 7px 2px 4px;
  background: #d2d2d2;
`;

const MasterPlugin = styled.div`
  height: 25px;
  line-height: 24px;
  background: #7aa39d;
  clip-path: polygon(0 0, calc(100% - 3px) 0, 100% 50%, calc(100% - 3px) 100%, 0 100%, 3px 50%);
  text-align: center;
  font-size: 8.1px;
`;

const MasterRow = styled.div`
  display: flex;
  gap: 6px;
  padding: 3px 0 0 1px;
`;

const SwitchGrid = styled.div`
  display: grid;
  grid-template-columns: 72px 72px;
  grid-auto-rows: 13.5px;
  gap: 3.3px 3px;
  padding-top: 1px;
`;

const Switch = styled.span`
  border: 1px solid ${(p) => (p.$on ? "#ac7427" : "#8e8e8e")};
  border-radius: 2px;
  background: ${(p) => (p.$on ? "#e68f1a" : "#f6f6f6")};
  text-align: center;
  font-size: 7.7px;
  line-height: 12px;
  letter-spacing: -0.35px;
`;

const MasterFader = styled.div`
  width: 68px;
  svg {
    margin-left: 3px;
  }
`;

const MasterBox = styled.div`
  height: 53px;
  margin-top: 1px;
  border: 1px solid #c4c4c4;
  background: linear-gradient(#e4e4e4 16px, #3a403c 16px, #3a403c 18px, #b3b3b3 18px);
`;

const MasterMeter = styled.div`
  width: 23px;
  height: 98px;
  background: #262626;
`;

const Watermark = styled.div`
  position: absolute;
  left: 94px;
  top: 118px;
  font-family: Lato, sans-serif;
  font-size: 27px;
  line-height: 30px;
  letter-spacing: 2.3px;
  color: #ffffff38;
`;
